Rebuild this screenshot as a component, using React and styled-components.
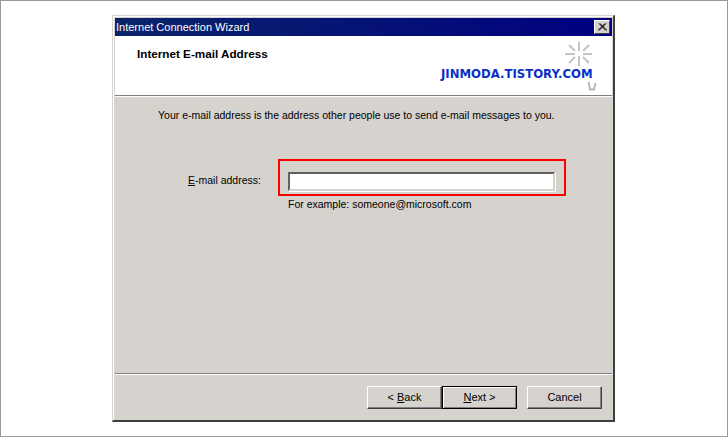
import styled, { createGlobalStyle } from "styled-components";

const GlobalStyle = createGlobalStyle`
    html, body {
        margin: 0;
        padding: 0;
        background: #fff;
    }
`

const Page = styled.div`
    box-sizing: border-box;
    width: 728px;
    height: 437px;
    border: 1px solid #999;
    padding-top: 14px;
    padding-left: 111px;
    font-family: "Liberation Sans", Arial, sans-serif;
    font-size: 10.5px;
    color: #000;
`

const Window = styled.div`
    box-sizing: border-box;
    width: 503px;
    height: 407px;
    background: #d6d3ce;
    border-style: solid;
    border-width: 1px 2px 2px 1px;
    border-color: #d6d3ce #404040 #404040 #d6d3ce;
    box-shadow: inset 1px 1px 0 #fff;
    padding: 2px 0 0 2px;
    display: flex;
    flex-direction: column;
`

const TitleBar = styled.div`
    box-sizing: border-box;
    height: 18px;
    flex: none;
    margin-right: 1px;
    padding: 0 2px 0 1px;
    background: linear-gradient(90deg, #0a246a, #000080);
    color: #fff;
    font-size: 11px;
    line-height: 18px;
    display: flex;
    align-items: center;
    justify-content: space-between;
`

const CloseButton = styled.div`
    box-sizing: border-box;
    width: 16px;
    height: 14px;
    background: #d6d3ce;
    border: 1px solid;
    border-color: #fff #404040 #404040 #fff;
    display: flex;
    align-items: center;
    justify-content: center;
`

const Header = styled.div`
    position: relative;
    box-sizing: border-box;
    height: 59px;
    flex: none;
    margin-right: 1px;
    background: #fff;
    padding: 11px 0 0 22px;
    font-weight: bold;
    font-size: 11.7px;
`

const Watermark = styled.div`
    position: absolute;
    left: 326px;
    top: 31px;
    font-family: "DejaVu Sans", sans-serif;
    font-size: 11.7px;
    font-weight: bold;
    color: #0a30c8;
    white-space: nowrap;
`

const Spark = styled.svg`
    position: absolute;
    left: 450px;
    top: 6px;
`

const Squiggle = styled.svg`
    position: absolute;
    left: 472px;
    top: 45px;
`

const Rule = styled.div`
    box-sizing: border-box;
    height: 2px;
    flex: none;
    margin-right: 1px;
    background: #808080;
    border-bottom: 1px solid #fff;
`

const Body = styled.div`
    flex: 1;
    display: flex;
    flex-direction: column;
`

const Intro = styled.p`
    margin: 11px 0 0 43px;
    line-height: 14px;
    white-space: nowrap;
`

const FieldRow = styled.div`
    margin: 37px 0 0 73px;
    display: flex;
    align-items: center;
`

const FieldLabel = styled.label`
    width: 90px;
    flex: none;
    margin-top: 4px;
`

const Key = styled.span`
    text-decoration: underline;
`

const FieldFrame = styled.div`
    box-sizing: border-box;
    width: 288px;
    height: 37px;
    border: 2px solid #ff0000;
    padding: 11px 0 0 8px;
`

const TextBox = styled.div`
    box-sizing: border-box;
    width: 267px;
    height: 19px;
    background: #fff;
    border-style: solid;
    border-width: 2px;
    border-color: #606060 #d6d3ce #d6d3ce #606060;
    box-shadow: 1px 1px 0 #fff;
`

const Hint = styled.p`
    margin: 1px 0 0 173px;
    line-height: 14px;
`

const Footer = styled.div`
    box-sizing: border-box;
    height: 45px;
    flex: none;
    padding: 11px 11px 0 0;
    display: flex;
    justify-content: flex-end;
`

const NavButton = styled.div`
    box-sizing: border-box;
    width: 75px;
    height: 23px;
    padding-bottom: 2px;
    margin-left: ${props => props.$gap}px;
    font-size: 11px;
    background: #d6d3ce;
    border: 1px solid;
    border-color: ${props => props.$primary ? "#000" : "#fff #404040 #404040 #fff"};
    box-shadow: ${props => props.$primary
        ? "inset 1px 1px 0 #fff, inset -1px -1px 0 #808080"
        : "inset -1px -1px 0 #808080"};
    display: flex;
    align-items: center;
    justify-content: center;
    white-space: pre;
`

function App() {
    return (
        <Page>
            <GlobalStyle />
            <Window>
                <TitleBar>
                    Internet Connection Wizard
                    <CloseButton>
                        <svg width="9" height="8" viewBox="0 0 9 8">
                            <path d="M1 0.5 L8 7.5 M8 0.5 L1 7.5 M2 0.5 L9 7.5 M7 0.5 L0 7.5" stroke="#000" fill="none" />
                        </svg>
                    </CloseButton>
                </TitleBar>
                <Header>
                    Internet E-mail Address
                    <Spark width="28" height="24" viewBox="0 0 28 24">
                        <path d="M14 0 V9 M14 14 V24 M0 12 H10 M18 12 H27 M4 3 L10 9 M24 3 L18 9 M4 21 L10 15 M24 21 L18 15" stroke="#c4c4c4" strokeWidth="2" fill="none" />
                    </Spark>
                    <Watermark>JINMODA.TISTORY.COM</Watermark>
                    <Squiggle width="10" height="10" viewBox="0 0 10 10">
                        <path d="M1.5 1 L3 8.5 H7 L8.5 2" stroke="#b4b4b4" strokeWidth="1.8" fill="none" />
                    </Squiggle>
                </Header>
                <Rule />
                <Body>
                    <Intro>Your e-mail address is the address other people use to send e-mail messages to you.</Intro>
                    <FieldRow>
                        <FieldLabel><Key>E</Key>-mail address:</FieldLabel>
                        <FieldFrame>
                            <TextBox />
                        </FieldFrame>
                    </FieldRow>
                    <Hint>For example: someone@microsoft.com</Hint>
                </Body>
                <Rule />
                <Footer>
                    <NavButton>{"< "}<Key>B</Key>ack</NavButton>
                    <NavButton $primary><Key>N</Key>{"ext >"}</NavButton>
                    <NavButton $gap={10}>Cancel</NavButton>
                </Footer>
            </Window>
        </Page>
    )
}

export default App;
